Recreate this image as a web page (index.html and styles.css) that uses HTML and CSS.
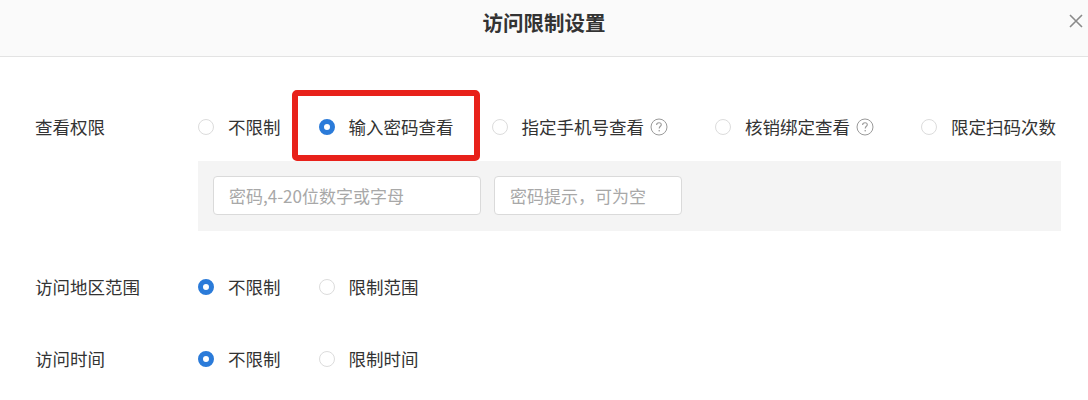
FILE: index.html
```html
<!DOCTYPE html>
<html lang="zh-CN">

<head>
	<meta charset="UTF-8">
	<meta name="viewport" content="width=device-width, initial-scale=1.0">
	<title>访问限制设置</title>
	<link rel="stylesheet" href="styles.css">
</head>

<body>
	<div class="dialog">
		<!-- 标题栏 -->
		<div class="dialog-head">
			<span></span>
			<h2 class="dialog-title">访问限制设置</h2>
			<span class="dialog-close">
				<svg width="14" height="14" viewBox="0 0 14 14">
					<path d="M1 1L13 13M13 1L1 13" stroke="#8a8a8a" stroke-width="1.6" fill="none" />
				</svg>
			</span>
		</div>

		<div class="dialog-body">
			<!-- 查看权限 -->
			<div class="form-row">
				<div class="form-label">查看权限</div>
				<div class="form-field">
					<div class="radio-group">
						<label class="radio"><i class="radio-dot"></i>不限制</label>
						<label class="radio radio-on mark"><i class="radio-dot"></i>输入密码查看</label>
						<label class="radio">
							<i class="radio-dot"></i>指定手机号查看
							<svg class="help" width="18" height="18" viewBox="0 0 18 18">
								<circle cx="9" cy="9" r="8" stroke="#9a9a9a" stroke-width="1" fill="none" />
								<path d="M6.6 7C6.6 5.5 7.7 4.7 9 4.7C10.3 4.7 11.3 5.6 11.3 6.7C11.3 8.2 9.2 8.4 9.2 10.4" stroke="#9a9a9a" stroke-width="1.1" fill="none" />
								<circle cx="9.2" cy="12.8" r="0.8" fill="#9a9a9a" />
							</svg>
						</label>
						<label class="radio">
							<i class="radio-dot"></i>核销绑定查看
							<svg class="help" width="18" height="18" viewBox="0 0 18 18">
								<circle cx="9" cy="9" r="8" stroke="#9a9a9a" stroke-width="1" fill="none" />
								<path d="M6.6 7C6.6 5.5 7.7 4.7 9 4.7C10.3 4.7 11.3 5.6 11.3 6.7C11.3 8.2 9.2 8.4 9.2 10.4" stroke="#9a9a9a" stroke-width="1.1" fill="none" />
								<circle cx="9.2" cy="12.8" r="0.8" fill="#9a9a9a" />
							</svg>
						</label>
						<label class="radio"><i class="radio-dot"></i>限定扫码次数</label>
					</div>
					<div class="pwd-panel">
						<input class="input input-pwd" type="text" placeholder="密码,4-20位数字或字母">
						<input class="input input-tip" type="text" placeholder="密码提示，可为空">
					</div>
				</div>
			</div>

			<!-- 访问地区范围 -->
			<div class="form-row row-area">
				<div class="form-label">访问地区范围</div>
				<div class="form-field">
					<div class="radio-group">
						<label class="radio radio-on"><i class="radio-dot"></i>不限制</label>
						<label class="radio"><i class="radio-dot"></i>限制范围</label>
					</div>
				</div>
			</div>

			<!-- 访问时间 -->
			<div class="form-row row-time">
				<div class="form-label">访问时间</div>
				<div class="form-field">
					<div class="radio-group">
						<label class="radio radio-on"><i class="radio-dot"></i>不限制</label>
						<label class="radio"><i class="radio-dot"></i>限制时间</label>
					</div>
				</div>
			</div>
		</div>
	</div>
</body>

</html>
```

FILE: styles.css
```css
* {
	box-sizing: border-box
}

body {
	margin: 0;
	background: #fff;
	font-family: "Noto Sans CJK SC", "Noto Sans", sans-serif;
	color: #333
}

.dialog {
	width: 1088px;
	height: 400px;
	overflow: hidden
}

/* 标题栏 */
.dialog-head {
	display: grid;
	grid-template-columns: 1fr auto 1fr;
	align-items: start;
	height: 57px;
	background: #fafafa;
	border-bottom: 1px solid #e3e3e3
}

.dialog-title {
	margin: 0;
	font-size: 20.5px;
	font-weight: bold;
	line-height: 44px;
	color: #333
}

.dialog-close {
	justify-self: end;
	display: flex;
	padding: 14px 5px 0 0
}

.dialog-body {
	padding: 50px 27px 0 35px
}

.form-row {
	display: flex
}

.row-area {
	margin-top: 36px
}

.row-time {
	margin-top: 32px
}

.form-label {
	width: 163px;
	flex: none;
	font-size: 17.5px;
	line-height: 40px
}

.form-field {
	flex: 1;
	min-width: 0
}

.radio-group {
	display: flex;
	align-items: center;
	height: 40px
}

.radio {
	display: flex;
	align-items: center;
	margin-right: 38px;
	font-size: 17.5px;
	line-height: 40px;
	color: #333;
	white-space: nowrap
}

.radio:last-child {
	margin-right: 0
}

.radio-dot {
	width: 16px;
	height: 16px;
	margin-right: 14px;
	border: 1px solid #dcdcdc;
	border-radius: 50%;
	background: #fff
}

.radio-on .radio-dot {
	border: 5px solid #2b7bd9;
	background: #fff
}

.help {
	margin-left: 6px;
	margin-right: 9px
}

/* 红框标注 */
.mark {
	position: relative
}

.mark:after {
	content: "";
	position: absolute;
	left: -27px;
	right: -26px;
	top: -17px;
	bottom: -14px;
	border: 6px solid #e8211a;
	border-radius: 5px
}

.pwd-panel {
	display: flex;
	gap: 13px;
	margin-top: 14px;
	padding: 15px;
	height: 70px;
	background: #f4f4f4
}

.input {
	height: 39px;
	padding: 0 15px;
	border: 1px solid #dadada;
	border-radius: 4px;
	background: #fff;
	font-family: "Noto Sans CJK SC", "Noto Sans", sans-serif;
	font-size: 17px;
	color: #333;
	outline: none
}

.input::placeholder {
	color: #a8a8a8
}

.input-pwd {
	width: 268px
}

.input-tip {
	width: 188px
}
```
